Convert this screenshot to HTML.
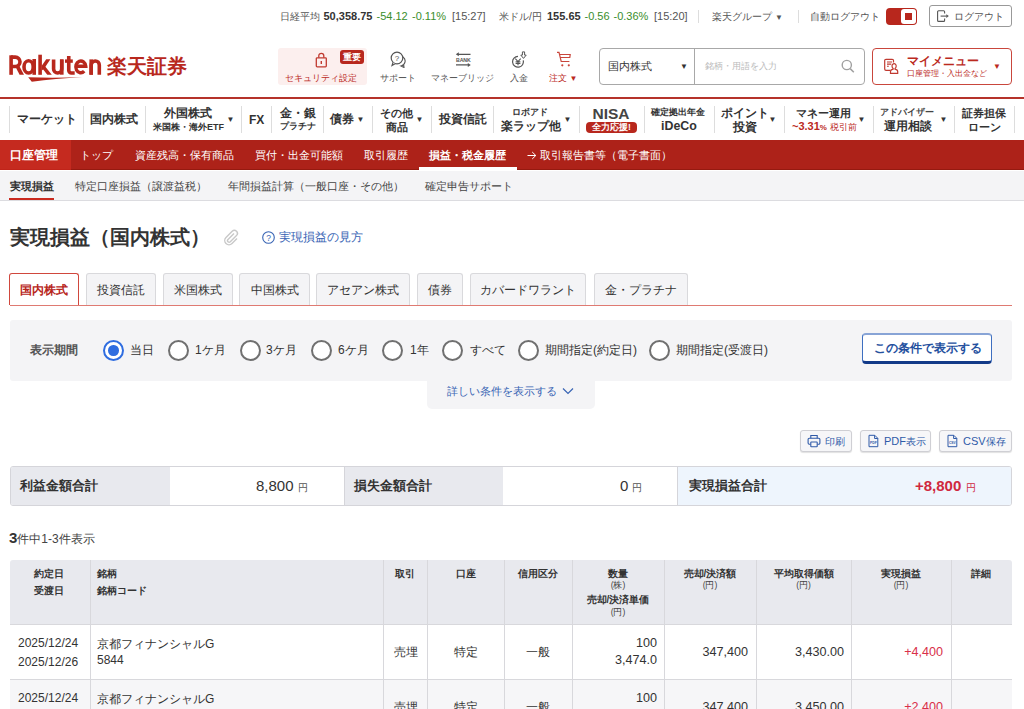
<!DOCTYPE html>
<html lang="ja"><head><meta charset="utf-8">
<style>
*{box-sizing:border-box;margin:0;padding:0}
html,body{width:1024px;height:709px;overflow:hidden;background:#fff}
body{position:relative;font-family:"Liberation Sans",sans-serif;color:#333}
.a{position:absolute;white-space:nowrap}
.t{line-height:1}
/* top bar */
.tb{font-size:11px;color:#555;top:10px;line-height:12px}
.tb b{color:#333}
.tb i{font-style:normal;font-size:10.2px}
.tb.g{color:#3a8e2c}
.sep{position:absolute;width:1px;background:#ddd}
/* nav */
.nav{font-size:12px;font-weight:bold;color:#333;line-height:13px;text-align:center}
.nsep{position:absolute;top:106px;height:27px;width:1px;background:#ddd}
.tri{font-size:8px;color:#333;transform:translate(-1.5px,-1px)}
/* red nav */
.rn{font-size:11px;color:#fff;top:149px;line-height:12px}
.gn{font-size:11px;color:#444;top:180px;line-height:12px}
.tab{position:absolute;top:273px;height:32px;border:1px solid #d9d9dc;border-bottom:none;border-radius:3px 3px 0 0;background:#f4f4f6;font-size:12px;color:#333;text-align:center;line-height:32px}
.radio{position:absolute;top:340px;width:21px;height:21px;border:2.2px solid #707070;border-radius:50%;background:#fff}
.rl{font-size:12px;color:#333;top:344px;line-height:13px}
.btn{position:absolute;top:430px;height:22px;border:1px solid #cfcfd4;border-radius:3px;background:#f6f6f8;box-shadow:0 1px 1px rgba(0,0,0,.12);font-size:11px;color:#2f5aa8;line-height:20px}
.th{font-size:10px;font-weight:bold;color:#333;line-height:12px}
.td{font-size:12px;color:#333;line-height:14px}
.sm{display:block;font-weight:normal;font-size:8.5px;line-height:11px;color:#444}
.bl{display:block;line-height:15px;margin-top:1px}
.bt{top:435px;font-size:11px;color:#2f5aa8;line-height:12px}
.bt i{font-style:normal;font-size:10.3px}
.vl{position:absolute;width:1px;background:#d8d8dc}
</style></head><body>

<!-- ============ TOP BAR ============ -->
<div class="a tb" style="left:280px"><i>日経平均</i></div>
<div class="a tb" style="left:323.5px"><b>50,358.75</b></div>
<div class="a tb g" style="left:376.5px">-54.12</div>
<div class="a tb g" style="left:412px">-0.11%</div>
<div class="a tb" style="left:452px">[15:27]</div>
<div class="a tb" style="left:499px"><i>米ドル/円</i></div>
<div class="a tb" style="left:547px"><b>155.65</b></div>
<div class="a tb g" style="left:584.5px">-0.56</div>
<div class="a tb g" style="left:613.5px">-0.36%</div>
<div class="a tb" style="left:654px">[15:20]</div>
<div class="sep" style="left:698px;top:10px;height:13px"></div>
<div class="a tb" style="left:712px"><i>楽天グループ</i> <span style="font-size:8px">▼</span></div>
<div class="sep" style="left:798px;top:10px;height:13px"></div>
<div class="a tb" style="left:810px"><i>自動ログアウト</i></div>
<div class="a" style="left:886px;top:8px;width:31px;height:17px;background:#b8271d;border-radius:4px"></div>
<div class="a" style="left:901px;top:9px;width:15px;height:15px;background:#fff;border-radius:3px"></div>
<div class="a" style="left:905px;top:13px;width:7px;height:7px;background:#b8271d"></div>
<div class="a" style="left:929px;top:5px;width:83px;height:22px;border:1px solid #999;border-radius:3px"></div>
<svg class="a" style="left:937px;top:10px" width="13" height="13" viewBox="0 0 13 13"><path d="M7.6 3.6V1.8a1 1 0 0 0 -1 -1H1.6a1 1 0 0 0 -1 1v8.6a1 1 0 0 0 1 1H6.6a1 1 0 0 0 1 -1V8.6" fill="none" stroke="#555" stroke-width="1.1"/><path d="M3.6 6.1H9.6" stroke="#555" stroke-width="1.1"/><path d="M9.3 4.2L11.8 6.1 9.3 8Z" fill="#555"/></svg>
<div class="a tb" style="left:954px;top:10px"><i>ログアウト</i></div>

<!-- ============ HEADER ============ -->
<svg class="a" style="left:0;top:0" width="110" height="90" viewBox="0 0 110 90" fill="#b8281d">
<rect x="9.3" y="55.3" width="3.6" height="19.5"/>
<path d="M11.1 57.1H15.3A4.7 4.7 0 0 1 15.3 66.5H11.1" fill="none" stroke="#b8281d" stroke-width="3.6"/>
<path d="M15.2 66.3H19.4L24 74.8H19.6Z"/>
<ellipse cx="28.6" cy="66.9" rx="4.6" ry="6.1" fill="none" stroke="#b8281d" stroke-width="3.6"/>
<rect x="32.4" y="59" width="3.6" height="15.8"/>
<rect x="38.3" y="54.7" width="3.6" height="20.1"/>
<path d="M41.9 65.6L46.2 59.2H50.4L44.2 68.4L41.9 70.4Z"/>
<path d="M44.4 65.4L51.8 74.8H47.3L42.2 68.2Z"/>
<path d="M53.6 59.4V68.9A4.05 4.05 0 0 0 61.7 68.9V59.4" fill="none" stroke="#b8281d" stroke-width="3.6"/>
<rect x="60" y="59.4" width="3.6" height="15.3"/>
<path d="M68.75 55.9V70.3A2.7 2.7 0 0 0 71.45 73H74.7" fill="none" stroke="#b8281d" stroke-width="3.6"/>
<rect x="65" y="59.4" width="7.8" height="3.4"/>
<path d="M75.6 66.25H85.75A5 5.9 0 1 0 84.2 71.2" fill="none" stroke="#b8281d" stroke-width="3.4"/>
<rect x="89.4" y="59.4" width="3.6" height="15.3"/>
<path d="M91.2 74.7V65A4.05 4.05 0 0 1 99.3 65V74.7" fill="none" stroke="#b8281d" stroke-width="3.6"/>
<path d="M28.2 77.3Q55 78.2 82.5 77.1Q55 79 31.8 81.7Z"/>
</svg>
<div class="a" style="left:107px;top:54px;font-size:20px;color:#b8281d;line-height:24px;font-weight:bold">楽天証券</div>

<div class="a" style="left:278px;top:48px;width:89px;height:37px;background:#fcefee;border-radius:3px"></div>
<svg class="a" style="left:315px;top:51.6px" width="13" height="16" viewBox="0 0 13 16"><rect x="1.3" y="5.8" width="10" height="9" rx="0.8" fill="none" stroke="#c03a30" stroke-width="1.3"/><path d="M3.8 5.8V3.8A2.5 2.5 0 0 1 8.8 3.8V5.8" fill="none" stroke="#c03a30" stroke-width="1.3"/><path d="M5.6 9h1.4v3h-1.4z" fill="#c03a30"/></svg>
<div class="a" style="left:340px;top:50px;width:24px;height:14px;background:#b8271d;border-radius:3px;color:#fff;font-size:9px;font-weight:bold;line-height:14px;text-align:center">重要</div>
<div class="a" style="left:285px;top:72px;font-size:9.3px;color:#bb2a1e;line-height:12px">セキュリティ設定</div>

<svg class="a" style="left:389px;top:51px" width="18" height="17" viewBox="0 0 18 17"><circle cx="8" cy="7" r="5.8" fill="none" stroke="#555" stroke-width="1.2"/><path d="M4 11.5L3 14.5 6.5 12.5" fill="#fff" stroke="#555" stroke-width="1.1"/><path d="M14 6a5 5 0 0 1 -2 9l3 1.5-.3-2.5" fill="none" stroke="#555" stroke-width="1.1"/><text x="8" y="10" font-size="8" text-anchor="middle" fill="#555" font-family="Liberation Sans">?</text></svg>
<div class="a" style="left:380px;top:72px;font-size:9.3px;color:#555;line-height:12px">サポート</div>

<svg class="a" style="left:455px;top:52px" width="17" height="15" viewBox="0 0 17 15"><path d="M2.5 2.3h13M1 12.9h13" fill="none" stroke="#555" stroke-width="1.3"/><path d="M0.8 2.3L3.8 0.3V4.3Z M15.8 12.9L12.8 10.9V14.9Z" fill="#555"/><text x="8.3" y="9.6" font-size="5.2" font-weight="bold" text-anchor="middle" fill="#555" font-family="Liberation Sans" letter-spacing="-0.1">BANK</text></svg>
<div class="a" style="left:431px;top:72px;font-size:9.3px;color:#555;line-height:12px">マネーブリッジ</div>

<svg class="a" style="left:510px;top:50px" width="18" height="18" viewBox="0 0 18 18"><path d="M8 6.4A5.4 5.4 0 1 0 13.2 10.4" fill="none" stroke="#555" stroke-width="1.2"/><path d="M5.3 8.6L8 11.5 10.7 8.6M8 11.5V15.2M5.6 11.8H10.4M5.6 13.4H10.4" fill="none" stroke="#555" stroke-width="1.1"/><path d="M12.4 1.9H14.6V5.1H16.2L13.5 8.4 10.8 5.1H12.4Z" fill="none" stroke="#555" stroke-width="1"/></svg>
<div class="a" style="left:510px;top:72px;font-size:9.3px;color:#555;line-height:12px">入金</div>

<svg class="a" style="left:556px;top:51px" width="16" height="16" viewBox="0 0 16 16"><path d="M1 1.3h2l2.2 9.2h8.2M4.2 6.5H13.8L14.2 3.5H3.5" fill="none" stroke="#c9463c" stroke-width="1.2"/><circle cx="6.3" cy="14.3" r="1.1" fill="#c9463c"/><circle cx="12.8" cy="14.3" r="1.1" fill="#c9463c"/></svg>
<div class="a" style="left:549px;top:72px;font-size:9.3px;color:#bb2a1e;line-height:12px">注文 <span style="font-size:8px">▼</span></div>

<div class="a" style="left:599px;top:48px;width:266px;height:37px;border:1px solid #a8a8a8;border-radius:4px"></div>
<div class="a" style="left:694px;top:49px;width:1px;height:35px;background:#a8a8a8"></div>
<div class="a" style="left:608px;top:60px;font-size:11px;color:#333;line-height:13px">国内株式</div>
<div class="a" style="left:680px;top:62px;font-size:8px;color:#333;line-height:9px">▼</div>
<div class="a" style="left:705px;top:61px;font-size:9px;color:#bbb;line-height:11px">銘柄・用語を入力</div>
<svg class="a" style="left:841px;top:59px" width="14" height="15" viewBox="0 0 14 15"><circle cx="5.8" cy="6" r="4.6" fill="none" stroke="#a0a0a0" stroke-width="1.4"/><path d="M9.2 9.6l3.6 3.6" stroke="#a0a0a0" stroke-width="1.5"/></svg>
<div class="a" style="left:872px;top:48px;width:140px;height:37px;border:1px solid #c9463c;border-radius:4px"></div>
<svg class="a" style="left:883px;top:58px" width="17" height="17" viewBox="0 0 17 17"><path d="M7.3 12.3H3a1.3 1.3 0 0 1 -1.3 -1.3V2.6A1.3 1.3 0 0 1 3 1.3h6.2a1.3 1.3 0 0 1 1.3 1.3V4.6" fill="none" stroke="#c03a30" stroke-width="1.2"/><path d="M4 4H9M4 6.1H8.3M4 8.2H5.8" fill="none" stroke="#c03a30" stroke-width="1.1"/><path d="M11.1 5.6a2.1 2.4 0 0 1 2.1 2.4c0 1.2-.6 2.2-1.2 2.6v.5c1.6.3 2.7 1 2.7 2.5v1.7H7.5v-1.7c0-1.5 1.1-2.2 2.7-2.5v-.5c-.6-.4-1.2-1.4-1.2-2.6a2.1 2.4 0 0 1 2.1 -2.4z" fill="none" stroke="#c03a30" stroke-width="1.2"/></svg>
<div class="a" style="left:907px;top:54px;font-size:11.7px;font-weight:bold;color:#bb2a1e;line-height:14px">マイメニュー</div>
<div class="a" style="left:907px;top:69px;font-size:7.7px;color:#bb2a1e;line-height:10px">口座管理・入出金など</div>
<div class="a" style="left:993px;top:62px;font-size:8px;color:#bb2a1e;line-height:9px">▼</div>

<div class="a" style="left:0;top:97px;width:1024px;height:2px;background:#b5322a"></div>

<!-- ============ NAV ============ -->
<div class="nsep" style="left:9px"></div>
<div class="nsep" style="left:83px"></div>
<div class="nsep" style="left:145px"></div>
<div class="nsep" style="left:241px"></div>
<div class="nsep" style="left:271px"></div>
<div class="nsep" style="left:323px"></div>
<div class="nsep" style="left:372px"></div>
<div class="nsep" style="left:431px"></div>
<div class="nsep" style="left:493px"></div>
<div class="nsep" style="left:579px"></div>
<div class="nsep" style="left:644px"></div>
<div class="nsep" style="left:714px"></div>
<div class="nsep" style="left:784px"></div>
<div class="nsep" style="left:873px"></div>
<div class="nsep" style="left:954px"></div>
<div class="nsep" style="left:1014px"></div>

<div class="a nav" style="left:17px;top:113px">マーケット</div>
<div class="a nav" style="left:90px;top:113px">国内株式</div>
<div class="a nav" style="left:164px;top:107px">外国株式</div>
<div class="a nav" style="left:153px;top:122px;font-size:9px;line-height:11px">米国株・海外ETF</div>
<div class="a tri" style="left:228px;top:116px">▼</div>
<div class="a nav" style="left:249px;top:114px">FX</div>
<div class="a nav" style="left:280px;top:107px">金・銀</div>
<div class="a nav" style="left:280px;top:121px;font-size:9px;line-height:11px">プラチナ</div>
<div class="a nav" style="left:330px;top:113px">債券</div>
<div class="a tri" style="left:358px;top:116px">▼</div>
<div class="a nav" style="left:380px;top:107px;font-size:11px">その他</div>
<div class="a nav" style="left:386px;top:121px;font-size:11px">商品</div>
<div class="a tri" style="left:417px;top:116px">▼</div>
<div class="a nav" style="left:439px;top:113px">投資信託</div>
<div class="a nav" style="left:512px;top:107px;font-size:9px;line-height:11px">ロボアド</div>
<div class="a nav" style="left:501px;top:119px;font-size:12px;line-height:14px">楽ラップ他</div>
<div class="a tri" style="left:565px;top:116px">▼</div>
<div class="a nav" style="left:592.5px;top:106px;font-size:15.5px;line-height:16px;color:#444">NISA</div>
<div class="a" style="left:586px;top:121.5px;width:51px;height:11.3px;background:#b8271d;border-radius:4px;color:#fff;font-size:8.5px;font-weight:bold;line-height:11.3px;text-align:center">全力応援!</div>
<div class="a nav" style="left:651px;top:107px;font-size:9px;line-height:11px">確定拠出年金</div>
<div class="a nav" style="left:661px;top:119px;font-size:12.4px;line-height:14px">iDeCo</div>
<div class="a nav" style="left:721px;top:107px">ポイント</div>
<div class="a nav" style="left:733px;top:121px">投資</div>
<div class="a tri" style="left:770px;top:116px">▼</div>
<div class="a nav" style="left:796px;top:107px;font-size:11px">マネー運用</div>
<div class="a nav" style="left:792px;top:120px;color:#bb2a1e;font-size:11px;line-height:12px">~3.31<span style="font-size:8px">%</span> <span style="font-weight:normal;font-size:9px">税引前</span></div>
<div class="a tri" style="left:859px;top:116px">▼</div>
<div class="a nav" style="left:880px;top:107px;font-size:9.3px;line-height:11px;color:#444">アドバイザー</div>
<div class="a nav" style="left:884px;top:120px">運用相談</div>
<div class="a tri" style="left:941px;top:116px">▼</div>
<div class="a nav" style="left:962px;top:107px;font-size:11px">証券担保</div>
<div class="a nav" style="left:968px;top:121px;font-size:11px">ローン</div>

<!-- ============ RED NAV ============ -->
<div class="a" style="left:0;top:140px;width:1024px;height:30px;background:#ad2219;border-bottom:1px solid #951a10"></div>
<div class="a" style="left:0;top:140px;width:71px;height:30px;background:#c52a1f;border-bottom:1px solid #c0241a"></div>
<div class="a rn" style="left:10px;top:149px;font-weight:bold;font-size:11.7px">口座管理</div>
<div class="a rn" style="left:80px">トップ</div>
<div class="a rn" style="left:135px">資産残高・保有商品</div>
<div class="a rn" style="left:255px">買付・出金可能額</div>
<div class="a rn" style="left:364px">取引履歴</div>
<div class="a rn" style="left:429px;font-weight:bold">損益・税金履歴</div>
<div class="a" style="left:419px;top:167px;width:98px;height:3px;background:#fff"></div>
<svg class="a" style="left:527px;top:151px" width="10" height="9" viewBox="0 0 10 9"><path d="M0.5 4.5H8.8M5.2 1L8.8 4.5 5.2 8" fill="none" stroke="#fff" stroke-width="1"/></svg>
<div class="a rn" style="left:540px">取引報告書等（電子書面）</div>

<!-- ============ GRAY NAV ============ -->
<div class="a" style="left:0;top:171px;width:1024px;height:30px;background:#f4f4f6;border-bottom:1px solid #dcdce0"></div>
<div class="a gn" style="left:10px;font-weight:bold;color:#333">実現損益</div>
<div class="a" style="left:9px;top:198px;width:45px;height:2px;background:#c92a1f"></div>
<div class="a gn" style="left:75px">特定口座損益（譲渡益税）</div>
<div class="a gn" style="left:228px">年間損益計算（一般口座・その他）</div>
<div class="a gn" style="left:425px">確定申告サポート</div>

<!-- ============ TITLE ============ -->
<div class="a" style="left:10px;top:226px;font-size:20.4px;font-weight:bold;color:#333;line-height:23px">実現損益（国内株式）</div>
<svg class="a" style="left:223px;top:229px" width="17" height="17" viewBox="0 0 17 17"><path d="M11 4.5L5 10.5a1.6 1.6 0 0 0 2.3 2.3l6.2-6.2a3 3 0 0 0 -4.3-4.3L3 8.5a4.2 4.2 0 0 0 6 6l5-5" fill="none" stroke="#c8c8c8" stroke-width="1.4"/></svg>
<svg class="a" style="left:262px;top:231px" width="13" height="13" viewBox="0 0 13 13"><circle cx="6.5" cy="6.5" r="5.8" fill="none" stroke="#3864b4" stroke-width="1.1"/><text x="6.5" y="9.6" font-size="8.5" text-anchor="middle" fill="#3864b4" font-family="Liberation Sans">?</text></svg>
<div class="a" style="left:279px;top:230px;font-size:12px;color:#3864b4;line-height:14px">実現損益の見方</div>

<!-- ============ TABS ============ -->
<div class="a" style="left:10px;top:305px;width:1002px;height:1px;background:#df7a72"></div>
<div class="tab" style="left:9px;width:70px;background:#fff;border:1px solid #d0473d;border-bottom:none;color:#b8271d;font-weight:bold;height:32px">国内株式</div>
<div class="tab" style="left:86px;width:70px">投資信託</div>
<div class="tab" style="left:163px;width:70px">米国株式</div>
<div class="tab" style="left:239px;width:71px">中国株式</div>
<div class="tab" style="left:316px;width:94px">アセアン株式</div>
<div class="tab" style="left:417px;width:46px">債券</div>
<div class="tab" style="left:470px;width:116px">カバードワラント</div>
<div class="tab" style="left:594px;width:94px">金・プラチナ</div>

<!-- ============ FILTER ============ -->
<div class="a" style="left:10px;top:320px;width:1002px;height:61px;background:#f4f4f6;border-radius:3px"></div>
<div class="a" style="left:427px;top:380px;width:168px;height:29px;background:#f4f4f6;border-radius:0 0 5px 5px"></div>
<div class="a" style="left:447px;top:385px;font-size:11px;color:#3864b4;line-height:13px">詳しい条件を表示する</div>
<svg class="a" style="left:562px;top:387px" width="12" height="8" viewBox="0 0 12 8"><path d="M1 1.5l5 5 5-5" fill="none" stroke="#3864b4" stroke-width="1.2"/></svg>

<div class="a" style="left:30px;top:344px;font-size:12px;font-weight:bold;color:#555;line-height:13px">表示期間</div>
<div class="radio" style="left:103px;border-color:#2f6de0"></div>
<div class="a" style="left:108.3px;top:345.3px;width:10.4px;height:10.4px;border-radius:50%;background:#2f6de0"></div>
<div class="a rl" style="left:130px">当日</div>
<div class="radio" style="left:168px"></div>
<div class="a rl" style="left:195px">1ケ月</div>
<div class="radio" style="left:240px"></div>
<div class="a rl" style="left:266px">3ケ月</div>
<div class="radio" style="left:311px"></div>
<div class="a rl" style="left:338px">6ケ月</div>
<div class="radio" style="left:382px"></div>
<div class="a rl" style="left:410px">1年</div>
<div class="radio" style="left:442px"></div>
<div class="a rl" style="left:470px">すべて</div>
<div class="radio" style="left:518px"></div>
<div class="a rl" style="left:545px">期間指定(約定日)</div>
<div class="radio" style="left:649px"></div>
<div class="a rl" style="left:676px">期間指定(受渡日)</div>

<div class="a" style="left:862px;top:333px;width:130px;height:31px;background:#fff;border:1px solid #3e6fc0;border-top:2px solid #88a4d6;border-bottom:3px solid #123a88;border-radius:4px"></div>
<div class="a" style="left:874px;top:342px;font-size:12px;font-weight:bold;color:#24509e;line-height:13px">この条件で表示する</div>

<!-- ============ BUTTONS ============ -->
<div class="btn" style="left:800px;width:52px"></div>
<svg class="a" style="left:807px;top:434px" width="14" height="14" viewBox="0 0 14 14"><path d="M3.8 4.3V1.5h6.4v2.8" fill="none" stroke="#2f5aa8" stroke-width="1.1"/><path d="M3.6 10.3H2.3a1.2 1.2 0 0 1 -1.2 -1.2V5.5a1.2 1.2 0 0 1 1.2 -1.2h9.4a1.2 1.2 0 0 1 1.2 1.2v3.6a1.2 1.2 0 0 1 -1.2 1.2H10.4" fill="none" stroke="#2f5aa8" stroke-width="1.1"/><rect x="3.8" y="8" width="6.4" height="4.8" rx="0.6" fill="none" stroke="#2f5aa8" stroke-width="1.1"/></svg>
<div class="a bt" style="left:825px"><i>印刷</i></div>
<div class="btn" style="left:860px;width:71px"></div>
<svg class="a" style="left:868px;top:434px" width="11" height="14" viewBox="0 0 11 14"><path d="M1 1.3h5.8l3 3v8.4H1z M6.6 1.3v3.2h3.2" fill="none" stroke="#2f5aa8" stroke-width="1"/><text x="5.4" y="10.2" font-size="3.4" text-anchor="middle" fill="#2f5aa8" font-family="Liberation Sans" font-weight="bold">PDF</text></svg>
<div class="a bt" style="left:884px">PDF<i>表示</i></div>
<div class="btn" style="left:939px;width:73px"></div>
<svg class="a" style="left:947px;top:434px" width="11" height="14" viewBox="0 0 11 14"><path d="M1 1.3h5.8l3 3v8.4H1z M6.6 1.3v3.2h3.2" fill="none" stroke="#2f5aa8" stroke-width="1"/><text x="5.4" y="10.2" font-size="3.4" text-anchor="middle" fill="#2f5aa8" font-family="Liberation Sans" font-weight="bold">CSV</text></svg>
<div class="a bt" style="left:963px">CSV<i>保存</i></div>

<!-- ============ SUMMARY ============ -->
<div class="a" style="left:10px;top:466px;width:1002px;height:40px;border:1px solid #d5d5da;border-radius:3px;overflow:hidden;background:#fff">
  <div class="a" style="left:0;top:0;width:159px;height:38px;background:#e8e9ee"></div>
  <div class="a" style="left:333px;top:0;width:159px;height:38px;background:#e8e9ee;border-left:1px solid #d5d5da"></div>
  <div class="a" style="left:666px;top:0;width:335px;height:38px;background:#eef5fd;border-left:1px solid #d5d5da"></div>
</div>
<div class="a" style="left:20px;top:478px;font-size:13.2px;font-weight:bold;color:#333;line-height:15px">利益金額合計</div>
<div class="a" style="left:256px;top:477px;font-size:15px;color:#333;line-height:17px">8,800</div>
<div class="a" style="left:298px;top:482px;font-size:9.5px;color:#555;line-height:11px">円</div>
<div class="a" style="left:354px;top:478px;font-size:13.2px;font-weight:bold;color:#333;line-height:15px">損失金額合計</div>
<div class="a" style="left:620px;top:477px;font-size:15px;color:#333;line-height:17px">0</div>
<div class="a" style="left:632px;top:482px;font-size:9.5px;color:#555;line-height:11px">円</div>
<div class="a" style="left:689px;top:478px;font-size:13.2px;font-weight:bold;color:#333;line-height:15px">実現損益合計</div>
<div class="a" style="left:915px;top:477px;font-size:15px;font-weight:bold;color:#d0283e;line-height:17px">+8,800</div>
<div class="a" style="left:966px;top:482px;font-size:9.5px;color:#d0283e;line-height:11px">円</div>

<!-- ============ COUNT ============ -->
<div class="a" style="left:9px;top:529px;font-size:12px;color:#444;line-height:17px"><b style="font-size:15px;color:#333">3</b>件中1-3件表示</div>

<!-- ============ TABLE ============ -->
<div class="a" style="left:10px;top:560px;width:1002px;height:149px;overflow:hidden;border-radius:3px 3px 0 0">
  <div class="a" style="left:0;top:0;width:1002px;height:64px;background:#e8e9ee"></div>
  <div class="a" style="left:0;top:64px;width:1002px;height:1px;background:#d8d8dc"></div>
  <div class="a" style="left:0;top:65px;width:1002px;height:54px;background:#fff"></div>
  <div class="a" style="left:0;top:119px;width:1002px;height:1px;background:#d8d8dc"></div>
  <div class="a" style="left:0;top:120px;width:1002px;height:40px;background:#f6f6f8"></div>
</div>
<div class="vl" style="left:90px;top:560px;height:149px"></div>
<div class="vl" style="left:383px;top:560px;height:149px"></div>
<div class="vl" style="left:427px;top:560px;height:149px"></div>
<div class="vl" style="left:504px;top:560px;height:149px"></div>
<div class="vl" style="left:572px;top:560px;height:149px"></div>
<div class="vl" style="left:664px;top:560px;height:149px"></div>
<div class="vl" style="left:756px;top:560px;height:149px"></div>
<div class="vl" style="left:851px;top:560px;height:149px"></div>
<div class="vl" style="left:951px;top:560px;height:149px"></div>

<div class="a th" style="left:34px;top:565px;line-height:17px">約定日<br>受渡日</div>
<div class="a th" style="left:97px;top:565px;line-height:17px">銘柄<br>銘柄コード</div>
<div class="a th" style="left:395px;top:568px">取引</div>
<div class="a th" style="left:456px;top:568px">口座</div>
<div class="a th" style="left:518px;top:568px">信用区分</div>
<div class="a th" style="left:572px;top:568px;width:92px;text-align:center">数量<span class="sm">(株)</span><span class="bl">売却/決済単価</span><span class="sm">(円)</span></div>
<div class="a th" style="left:664px;top:568px;width:92px;text-align:center">売却/決済額<span class="sm">(円)</span></div>
<div class="a th" style="left:756px;top:568px;width:95px;text-align:center">平均取得価額<span class="sm">(円)</span></div>
<div class="a th" style="left:851px;top:568px;width:100px;text-align:center">実現損益<span class="sm">(円)</span></div>
<div class="a th" style="left:971px;top:568px">詳細</div>

<div class="a td" style="left:18px;top:634px;line-height:19px">2025/12/24<br>2025/12/26</div>
<div class="a td" style="left:97px;top:636px;line-height:16px">京都フィナンシャルG<br>5844</div>
<div class="a td" style="left:394px;top:645px">売埋</div>
<div class="a td" style="left:454px;top:645px">特定</div>
<div class="a td" style="left:526px;top:645px">一般</div>
<div class="a td" style="left:572px;top:635px;width:85px;text-align:right;line-height:17px;font-size:12.6px">100<br>3,474.0</div>
<div class="a td" style="left:664px;top:645px;width:84px;text-align:right;font-size:12.6px">347,400</div>
<div class="a td" style="left:756px;top:645px;width:88px;text-align:right;font-size:12.6px">3,430.00</div>
<div class="a td" style="left:851px;top:645px;width:92px;text-align:right;color:#d9304a;font-size:12.6px">+4,400</div>

<div class="a td" style="left:18px;top:691px">2025/12/24</div>
<div class="a td" style="left:97px;top:692px">京都フィナンシャルG</div>
<div class="a td" style="left:394px;top:700px">売埋</div>
<div class="a td" style="left:454px;top:700px">特定</div>
<div class="a td" style="left:526px;top:700px">一般</div>
<div class="a td" style="left:572px;top:691px;width:85px;text-align:right;font-size:12.6px">100</div>
<div class="a td" style="left:664px;top:700px;width:84px;text-align:right;font-size:12.6px">347,400</div>
<div class="a td" style="left:756px;top:700px;width:88px;text-align:right;font-size:12.6px">3,450.00</div>
<div class="a td" style="left:851px;top:700px;width:92px;text-align:right;color:#d9304a;font-size:12.6px">+2,400</div>

</body></html>
